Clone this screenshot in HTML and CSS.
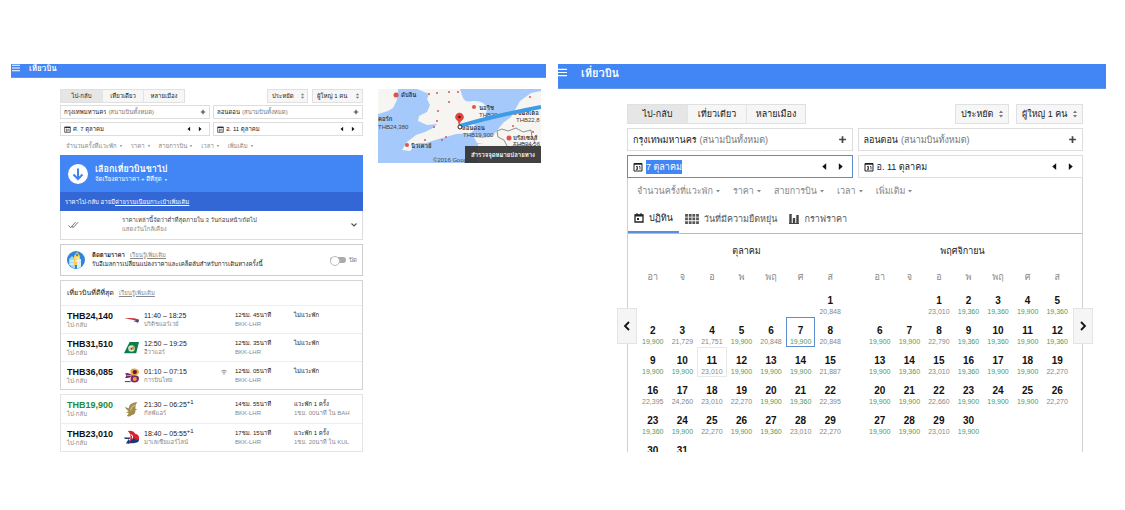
FILE: index.html
```html
<!DOCTYPE html>
<html lang="th">
<head>
<meta charset="utf-8">
<title>เที่ยวบิน</title>
<link rel="stylesheet" href="styles.css">
</head>
<body>
<svg class="defs" aria-hidden="true">
  <symbol id="menu" viewBox="0 0 10 10"><path d="M0 1.500h10M0 5h10M0 8.500h10" stroke="currentColor" stroke-width="1.300"/></symbol>
  <symbol id="cal" viewBox="0 0 10 10"><path d="M1 1.500h8v7.500H1z" fill="#fff" stroke="#222"/><path d="M1 2h8" stroke="#222" stroke-width="1.500"/><path d="M3 4.500h1.500v3H3M3 6h1.500M6 4.500h1v3" fill="none" stroke="#222" stroke-width=".8"/></symbol>
  <symbol id="plus" viewBox="0 0 8 8"><path d="M4 1v6M1 4h6" stroke="#444" stroke-width="1.500"/></symbol>
  <symbol id="prev" viewBox="0 0 8 8"><path d="M5.500 1v6L2 4z" fill="#111"/></symbol>
  <symbol id="next" viewBox="0 0 8 8"><path d="M2.500 1v6L6 4z" fill="#111"/></symbol>
  <symbol id="drop" viewBox="0 0 6 6"><path d="M1 2h4L3 4.500z" fill="currentColor"/></symbol>
  <symbol id="updown" viewBox="0 0 6 10"><path d="M1 4l2-2.500L5 4zM1 6l2 2.500L5 6z" fill="#777"/></symbol>
</svg>
<main class="screens">
  <section class="screen small">
    <header class="bar"><button class="icon-btn" aria-label="เมนู"><svg class="menu"><use href="#menu"/></svg></button><h1>เที่ยวบิน</h1></header>
    <div class="content">
      <div class="results">
        <form class="search">
          <div class="top-row">
            <div class="tabs"><button type="button" class="on">ไป-กลับ</button><button type="button">เที่ยวเดียว</button><button type="button">หลายเมือง</button></div>
            <span class="pick"><select aria-label="ชั้นโดยสาร"><option>ประหยัด</option></select><svg><use href="#updown"/></svg></span>
            <span class="pick"><select aria-label="ผู้โดยสาร"><option>ผู้ใหญ่ 1 คน</option></select><svg><use href="#updown"/></svg></span>
          </div>
          <div class="fields">
            <label class="field"><input type="text" aria-label="ต้นทาง" value="กรุงเทพมหานคร"><span class="hint">(สนามบินทั้งหมด)</span><svg class="end"><use href="#plus"/></svg></label>
            <label class="field"><input type="text" aria-label="ปลายทาง" value="ลอนดอน"><span class="hint">(สนามบินทั้งหมด)</span><svg class="end"><use href="#plus"/></svg></label>
            <div class="field"><svg class="cal"><use href="#cal"/></svg><input type="text" aria-label="วันไป" value="ศ. 7 ตุลาคม"><button type="button" class="icon-btn end" aria-label="ก่อนหน้า"><svg><use href="#prev"/></svg></button><button type="button" class="icon-btn" aria-label="ถัดไป"><svg><use href="#next"/></svg></button></div>
            <div class="field"><svg class="cal"><use href="#cal"/></svg><input type="text" aria-label="วันกลับ" value="อ. 11 ตุลาคม"><button type="button" class="icon-btn end" aria-label="ก่อนหน้า"><svg><use href="#prev"/></svg></button><button type="button" class="icon-btn" aria-label="ถัดไป"><svg><use href="#next"/></svg></button></div>
          </div>
        </form>
        <div class="filters"><button>จำนวนครั้งที่แวะพัก<svg><use href="#drop"/></svg></button><button>ราคา<svg><use href="#drop"/></svg></button><button>สายการบิน<svg><use href="#drop"/></svg></button><button>เวลา<svg><use href="#drop"/></svg></button><button>เพิ่มเติม<svg><use href="#drop"/></svg></button></div>

        <div class="banner">
          <svg class="arrow" viewBox="0 0 20 20"><circle cx="10" cy="10" r="10" fill="#fff"/><path d="M10 4.500v10M5.500 10.500L10 15l4.500-4.500" fill="none" stroke="#3f83f3" stroke-width="2"/></svg>
          <div><h2>เลือกเที่ยวบินขาไป</h2><p>จัดเรียงตามราคา + ดีที่สุด <svg class="tiny"><use href="#drop"/></svg></p></div>
        </div>
        <div class="fees"><p>ราคาไป-กลับ อาจมี<a href="#fees">ค่าธรรมเนียมกระเป๋าเพิ่มเติม</a></p></div>
        <div class="notice">
          <svg class="ticks" viewBox="0 0 12 8"><path d="M.5 4.500l2.500 2.500L8 1M4 5l1.500 2L11 1" fill="none" stroke="#666"/></svg>
          <div class="notice-text"><p>ราคาเหล่านี้จัดว่าต่ำที่สุดภายใน 3 วันก่อนหน้า/ถัดไป</p><p class="muted">แสดงวันใกล้เคียง</p></div>
          <button class="icon-btn" aria-label="ขยาย"><svg viewBox="0 0 8 8"><path d="M1.500 2.500L4 5l2.500-2.500" fill="none" stroke="#555" stroke-width="1.200"/></svg></button>
        </div>

        <div class="track">
          <svg class="tag" viewBox="0 0 18 18"><circle cx="9" cy="9" r="9" fill="#2f86d8"/><path d="M2 8l3-3 3 3v9H6l-4-3z" fill="#a6d4f5"/><path d="M7 5l3-4 3 4v9H7z" fill="#f7ce4b"/><path d="M10 8h4v8l-4 2z" fill="#dcecf8"/><path d="M8 7h4M8 10h4M3 10h4M3 13h4" stroke="#fff"/><circle cx="10" cy="4" r="1" fill="#2f6fb8"/></svg>
          <div><p><b>ติดตามราคา</b><a href="#track">เรียนรู้เพิ่มเติม</a></p><p>รับอีเมลการเปลี่ยนแปลงราคาและเคล็ดลับสำหรับการเดินทางครั้งนี้</p></div>
          <label class="switch"><input type="checkbox">ปิด</label>
        </div>

        <section class="flights">
          <h3>เที่ยวบินที่ดีที่สุด<a href="#best">เรียนรู้เพิ่มเติม</a></h3>
          <article class="flight">
            <div><strong>THB24,140</strong><small>ไป-กลับ</small></div>
            <svg viewBox="0 0 16 16"><path d="M0 7q8-1.500 16 1l-1 2q-5-2-15-3z" fill="#d62f3a"/><path d="M10 9.500l6-1-1 3z" fill="#2b4a8c"/></svg>
            <div><p class="time">11:40 – 18:25</p><small>บริติชแอร์เวย์</small></div><i></i>
            <div><p>12ชม. 45นาที</p><small>BKK-LHR</small></div><div><p>ไม่แวะพัก</p></div>
          </article>
          <article class="flight">
            <div><strong>THB31,510</strong><small>ไป-กลับ</small></div>
            <svg viewBox="0 0 16 16"><path d="M6 2h10l-3 12H0z" fill="#0c7c4c"/><circle cx="8" cy="9" r="3.500" fill="#d7e5d0"/><path d="M5 10l6-4v4z" fill="#e48b35"/><path d="M7 8l2 1-1 2z" fill="#0c7c4c"/></svg>
            <div><p class="time">12:50 – 19:25</p><small>อีวาแอร์</small></div><i></i>
            <div><p>12ชม. 35นาที</p><small>BKK-LHR</small></div><div><p>ไม่แวะพัก</p></div>
          </article>
          <article class="flight">
            <div><strong>THB36,085</strong><small>ไป-กลับ</small></div>
            <svg viewBox="0 0 16 16"><path d="M1 6q4-2 8 2-4 4-8 2 3-2 0-4z" fill="#792a68"/><path d="M8 8Q5 1 10 .5q6 0 6 4-1 4-8 3.500z" fill="#eea52c"/><path d="M8 8q8-1 8 3 0 4.500-5 4.500-6 0-3-7.500z" fill="#792a68"/><circle cx="11.500" cy="4.300" r="2.300" fill="#501d52"/><circle cx="11.500" cy="11.700" r="2.200" fill="#ef9e38"/><path d="M3 8h5" stroke="#e8a034"/><path d="M1 14.500h6" stroke="#333"/></svg>
            <div><p class="time">01:10 – 07:15</p><small>การบินไทย</small></div>
            <i><svg viewBox="0 0 8 8"><path d="M.5 3q3.500-3 7 0M2 4.800q2-1.800 4 0" fill="none" stroke="#666"/><circle cx="4" cy="6.500" r=".8" fill="#666"/></svg></i>
            <div><p>12ชม. 05นาที</p><small>BKK-LHR</small></div><div><p>ไม่แวะพัก</p></div>
          </article>
        </section>
        <section class="flights more">
          <article class="flight">
            <div><strong class="best">THB19,900</strong><small>ไป-กลับ</small></div>
            <svg viewBox="0 0 16 16"><path d="M14 0Q5 1 5 7L1 5q1 3 4 5l-3 1 3 1-2 3q3 1 5-1 5-1 4-5l2-1-2-1q0-4 2-7z" fill="#a28b4c"/><path d="M12 3Q7 5 7 9" fill="none" stroke="#ded2aa"/></svg>
            <div><p class="time">21:30 – 06:25<sup>+1</sup></p><small>กัลฟ์แอร์</small></div><i></i>
            <div><p>14ชม. 55นาที</p><small>BKK-LHR</small></div><div><p>แวะพัก 1 ครั้ง</p><small>1ชม. 00นาที ใน BAH</small></div>
          </article>
          <article class="flight">
            <div><strong>THB23,010</strong><small>ไป-กลับ</small></div>
            <svg viewBox="0 0 16 16"><path d="M4 1q6-1 8 3 4 1 4 4v3H9l-2 3-3 1 3-6q0-6-3-8z" fill="#d3242f"/><path d="M0 8h7l-1 1.500H1zM5 9.500l-3 5h3l3-4q3 0 2-3l2 3h4q0 3.500-6 3.500H7z" fill="#1c3776"/><path d="M7 5q3 0 2 4" fill="none" stroke="#fff"/></svg>
            <div><p class="time">18:40 – 05:55<sup>+1</sup></p><small>มาเลเซียแอร์ไลน์</small></div><i></i>
            <div><p>17ชม. 15นาที</p><small>BKK-LHR</small></div><div><p>แวะพัก 1 ครั้ง</p><small>1ชม. 20นาที ใน KUL</small></div>
          </article>
        </section>
      </div>

      <figure class="map">
        <svg viewBox="0 0 163 74" role="img" aria-label="แผนที่">
          <path d="M0 0h163v74H0z" fill="#a5c9fb"/>
          <path d="M0 0h20l-1 11-4 8-5 3-10 3zM39 0h43l3 9q3 5 9 3 13-1 15 8l-3 12-10 3 2 4-5 5-15 1-10 3-11 3-9 3-9 0-7 8-8-1 5-8 9-7 9-3 8-4 4-4-10 1-9-4 1-5 8-4 3-7-3-6 2-5zM153 4l10-2v72h-30l-4-4 0-5-8-8-22-3-3-6 7 1 10-1 5-5 7-9 8-6 9-16z" fill="#f7f5f2"/>
          <path d="M136 74l-4-9-15-10h-17v19z" fill="#f7f5f2"/>
          <path d="M119 42l5-2 6 2 8-3 7 4 8-2 1 7 3 5-4 4-8-3-5 3-4-2-2 5-5-3-3-6-6-3z" fill="none" stroke="#777" stroke-width=".8"/>
          <g fill="#ce5960"><circle cx="51" cy="5" r="1"/><circle cx="59" cy="4" r="1"/><circle cx="71" cy="3" r="1"/><circle cx="80" cy="3" r="1"/><circle cx="71" cy="13" r="1"/><circle cx="60" cy="22" r="1"/><circle cx="59" cy="32" r="1"/><circle cx="56" cy="38" r="1"/><circle cx="68" cy="48" r="1"/><circle cx="64" cy="51" r="1"/><circle cx="47" cy="51" r="1"/><circle cx="152" cy="8" r="1"/><circle cx="155" cy="43" r="1"/><circle cx="135" cy="37" r="1"/></g>
          <g fill="#df524e"><circle cx="18" cy="6" r="2.500"/><circle cx="96" cy="18" r="2"/><circle cx="29" cy="56" r="2"/><circle cx="131" cy="49" r="2.500"/><circle cx="137" cy="24" r="2"/></g>
          <g class="map-text"><text x="23" y="8">ดับลิน</text><text x="0" y="32">คอร์ก</text><text class="fare" x="0" y="40">THB24,380</text><text x="101" y="21">นอริช</text><text class="fare" x="101" y="28">THB20,</text><text x="140" y="26">อัมสเตอ</text><text class="fare" x="138" y="33">THB22,8</text><text x="84" y="41">ลอนดอน</text><text class="fare" x="85" y="48">THB19,900</text><text x="135" y="51">บรัสเซลส์</text><text class="fare" x="135" y="57">THB24,56</text><text x="33" y="59">นิวเควย์</text><text class="fare" x="55" y="73">©2016 Goog</text></g>
          <path d="M82 37Q115 27 163 18" fill="none" stroke="#3b9de8" stroke-width="4"/>
          <circle cx="82" cy="38" r="2" fill="#fff" stroke="#222"/>
          <path d="M81 36q0-4-3-6a4 4 0 1 1 7 0q-3 2-4 6z" fill="#e8453c" stroke="#b7312b" stroke-width=".5"/><circle cx="81.500" cy="28" r="1.300" fill="#5d1512"/>
        </svg>
        <button>สำรวจจุดหมายปลายทาง</button>
      </figure>
    </div>
  </section>

  <section class="screen large">
    <header class="bar"><button class="icon-btn" aria-label="เมนู"><svg class="menu"><use href="#menu"/></svg></button><h1>เที่ยวบิน</h1></header>
    <div class="content">
      <div class="results">
        <form class="search">
          <div class="top-row">
            <div class="tabs"><button type="button" class="on">ไป-กลับ</button><button type="button">เที่ยวเดียว</button><button type="button">หลายเมือง</button></div>
            <span class="pick"><select aria-label="ชั้นโดยสาร"><option>ประหยัด</option></select><svg><use href="#updown"/></svg></span>
            <span class="pick"><select aria-label="ผู้โดยสาร"><option>ผู้ใหญ่ 1 คน</option></select><svg><use href="#updown"/></svg></span>
          </div>
          <div class="fields">
            <label class="field"><input type="text" aria-label="ต้นทาง" value="กรุงเทพมหานคร"><span class="hint">(สนามบินทั้งหมด)</span><svg class="end"><use href="#plus"/></svg></label>
            <label class="field"><input type="text" aria-label="ปลายทาง" value="ลอนดอน"><span class="hint">(สนามบินทั้งหมด)</span><svg class="end"><use href="#plus"/></svg></label>
            <div class="field active"><svg class="cal"><use href="#cal"/></svg><input type="text" aria-label="วันไป" value="7 ตุลาคม"><button type="button" class="icon-btn end" aria-label="ก่อนหน้า"><svg><use href="#prev"/></svg></button><button type="button" class="icon-btn" aria-label="ถัดไป"><svg><use href="#next"/></svg></button></div>
            <div class="field"><svg class="cal"><use href="#cal"/></svg><input type="text" aria-label="วันกลับ" value="อ. 11 ตุลาคม"><button type="button" class="icon-btn end" aria-label="ก่อนหน้า"><svg><use href="#prev"/></svg></button><button type="button" class="icon-btn" aria-label="ถัดไป"><svg><use href="#next"/></svg></button></div>
          </div>
        </form>
        <div class="picker">
          <div class="filters"><button>จำนวนครั้งที่แวะพัก<svg><use href="#drop"/></svg></button><button>ราคา<svg><use href="#drop"/></svg></button><button>สายการบิน<svg><use href="#drop"/></svg></button><button>เวลา<svg><use href="#drop"/></svg></button><button>เพิ่มเติม<svg><use href="#drop"/></svg></button></div>
          <nav class="views">
            <button class="on"><svg class="v-cal" viewBox="0 0 10 10"><path d="M1 2h8v7H1z" fill="none" stroke="#222" stroke-width="1.300"/><path d="M1 2.500h8" stroke="#222" stroke-width="2"/><path d="M3 0v2M7 0v2" stroke="#222"/><path d="M3 5h2v2H3z" fill="#222"/></svg>ปฏิทิน</button>
            <button><svg class="v-grid" viewBox="0 0 14 10"><path d="M1.500 0v10M5.200 0v10M8.800 0v10M12.500 0v10" stroke="#555" stroke-width="2.800" stroke-dasharray="2.700 .9"/></svg>วันที่มีความยืดหยุ่น</button>
            <button><svg class="v-bars" viewBox="0 0 10 10"><path d="M1.500 0v10M5 4v6M8.500 1v9" stroke="#444" stroke-width="2.400"/><path d="M0 9.500h10" stroke="#444"/></svg>กราฟราคา</button>
          </nav>
          <div class="months">
            <table>
              <caption>ตุลาคม</caption>
              <thead><tr><th>อา</th><th>จ</th><th>อ</th><th>พ</th><th>พฤ</th><th>ศ</th><th>ส</th></tr></thead>
              <tbody>
              <tr><td></td><td></td><td></td><td></td><td></td><td></td><td><b>1</b>20,848</td></tr>
              <tr><td class="low"><b>2</b>19,900</td><td><b>3</b>21,729</td><td><b>4</b>21,751</td><td class="low"><b>5</b>19,900</td><td><b>6</b>20,848</td><td class="low chosen"><b>7</b>19,900</td><td><b>8</b>20,848</td></tr>
              <tr><td class="low"><b>9</b>19,900</td><td class="low"><b>10</b>19,900</td><td class="return"><b>11</b>23,010</td><td class="low"><b>12</b>19,900</td><td class="low"><b>13</b>19,900</td><td class="low"><b>14</b>19,900</td><td><b>15</b>21,887</td></tr>
              <tr><td><b>16</b>22,395</td><td><b>17</b>24,260</td><td><b>18</b>23,010</td><td><b>19</b>22,270</td><td class="low"><b>20</b>19,900</td><td class="low"><b>21</b>19,360</td><td><b>22</b>22,395</td></tr>
              <tr><td class="low"><b>23</b>19,360</td><td class="low"><b>24</b>19,900</td><td><b>25</b>22,270</td><td class="low"><b>26</b>19,900</td><td class="low"><b>27</b>19,360</td><td><b>28</b>23,010</td><td><b>29</b>22,270</td></tr>
              <tr><td><b>30</b></td><td><b>31</b></td><td></td><td></td><td></td><td></td><td></td></tr>
              </tbody>
            </table>
            <table>
              <caption>พฤศจิกายน</caption>
              <thead><tr><th>อา</th><th>จ</th><th>อ</th><th>พ</th><th>พฤ</th><th>ศ</th><th>ส</th></tr></thead>
              <tbody>
              <tr><td></td><td></td><td><b>1</b>23,010</td><td class="low"><b>2</b>19,360</td><td class="low"><b>3</b>19,360</td><td class="low"><b>4</b>19,900</td><td class="low"><b>5</b>19,360</td></tr>
              <tr><td class="low"><b>6</b>19,900</td><td class="low"><b>7</b>19,900</td><td><b>8</b>22,790</td><td class="low"><b>9</b>19,360</td><td class="low"><b>10</b>19,360</td><td class="low"><b>11</b>19,900</td><td class="low"><b>12</b>19,360</td></tr>
              <tr><td class="low"><b>13</b>19,900</td><td class="low"><b>14</b>19,360</td><td><b>15</b>23,010</td><td class="low"><b>16</b>19,360</td><td class="low"><b>17</b>19,900</td><td class="low"><b>18</b>19,900</td><td><b>19</b>22,270</td></tr>
              <tr><td class="low"><b>20</b>19,900</td><td class="low"><b>21</b>19,900</td><td><b>22</b>22,660</td><td class="low"><b>23</b>19,900</td><td class="low"><b>24</b>19,900</td><td class="low"><b>25</b>19,900</td><td><b>26</b>22,270</td></tr>
              <tr><td class="low"><b>27</b>19,900</td><td class="low"><b>28</b>19,900</td><td><b>29</b>23,010</td><td class="low"><b>30</b>19,900</td><td></td><td></td><td></td></tr>
              </tbody>
            </table>
          </div>
          <button class="page back" aria-label="เดือนก่อนหน้า"><svg viewBox="0 0 8 10"><path d="M6 1L2 5l4 4" fill="none" stroke="#111" stroke-width="1.800"/></svg></button>
          <button class="page forward" aria-label="เดือนถัดไป"><svg viewBox="0 0 8 10"><path d="M2 1l4 4-4 4" fill="none" stroke="#111" stroke-width="1.800"/></svg></button>
        </div>
      </div>
    </div>
  </section>
</main>
</body>
</html>
```
FILE: styles.css
```css
* { box-sizing: border-box; }
body { margin: 0; background: #fff; color: #222; font-family: "Liberation Sans", Loma, "Noto Looped Thai", "Noto Sans Thai", sans-serif; }
h1, h2, h3, p, figure { margin: 0; font-weight: normal; }
button, input, select { font: inherit; color: inherit; margin: 0; padding: 0; border: 0; background: none; }
svg { display: block; flex: none; }
a { color: inherit; }
.defs { position: absolute; width: 0; height: 0; }

.screens { display: flex; gap: 12px; padding: 64px 19px 58px 11px; }
.screen { min-width: 0; max-height: 388px; overflow: hidden; }
.small { flex: 535; font-size: 6px; line-height: 10px; }
.large { flex: 548; font-size: 9px; line-height: 14px; }

.bar { display: flex; align-items: flex-start; background: #4285f4; color: #fff; }
.small .bar { height: 14px; gap: 9px; padding-left: 1px; border-bottom: 1px solid #6b97dc; }
.large .bar { height: 25px; gap: 14px; border-bottom: 1px solid #6b97dc; }
.small .menu { width: 8px; height: 8px; }
.large .menu { width: 9px; height: 17px; }
.bar h1 { font-weight: bold; }
.small h1 { font-size: 8px; line-height: 10px; }
.large h1 { font-size: 11px; line-height: 18px; }
.icon-btn { display: flex; }

.small .content { display: flex; align-items: flex-start; gap: 15px; padding: 11px 5px 0 49px; }
.large .content { padding: 15px 23px 0 69px; }
.results { flex: 1; min-width: 0; }

.top-row { display: flex; align-items: center; }
.tabs { display: flex; margin-right: auto; border: 1px solid #e0e0e0; background: #f6f6f6; }
.tabs button { color: #222; }
.tabs button + button { border-left: 1px solid #e4e4e4; }
.tabs .on { background: #e6e6e6; }
.small .tabs button { width: 41px; height: 12px; }
.large .tabs button { width: 59px; height: 18px; }
.pick { display: flex; align-items: center; justify-content: space-between; background: #f6f6f6; border: 1px solid #e0e0e0; }
.pick select { appearance: none; flex: 1; min-width: 0; color: #222; }
.small .pick { height: 14px; margin-left: 4px; padding: 0 2px 0 4px; width: 41px; }
.small .pick + .pick { width: 51px; }
.large .pick { height: 20px; margin-left: 7px; padding: 0 4px 0 5px; width: 54px; }
.large .pick + .pick { width: 67px; }
.small .pick svg { width: 5px; height: 8px; }
.large .pick svg { width: 6px; height: 10px; }

.fields { display: grid; grid-template-columns: 1fr 1fr; }
.small .fields { gap: 3px; margin-top: 2px; }
.large .fields { gap: 4px 5px; margin-top: 4px; }
.field { display: flex; align-items: center; border: 1px solid #ddd; }
.small .field { height: 14px; padding: 0 3px; gap: 2px; }
.large .field { height: 23px; padding: 0 5px; gap: 3px; }
.field input { field-sizing: content; color: #222; }
.hint { color: #777; }
.field .end { margin-left: auto; }
.small .field svg { width: 6px; height: 6px; }
.small .field .icon-btn { width: 9px; }
.large .field svg { width: 9px; height: 9px; }
.large .field .icon-btn { width: 13px; justify-content: center; }
.small .field svg.cal { width: 7px; height: 7px; }
.large .field svg.cal { width: 10px; height: 10px; }
.active { border: 1px solid #5b8bd0; }
.field.active input { background: #4285f4; color: #fff; }

.filters { display: flex; color: #888; }
.filters button { display: flex; align-items: center; }
.small .filters { gap: 8px; padding: 4px 6px; height: 19px; }
.large .filters { gap: 12px; padding: 6px 9px; height: 26px; }
.small .filters svg, .tiny { width: 4px; height: 4px; margin-left: 2px; }
.large .filters svg { width: 6px; height: 6px; margin-left: 2px; }

.banner { display: flex; align-items: center; gap: 7px; height: 37px; padding: 0 8px; background: #4285f4; color: #fff; }
.arrow { width: 20px; height: 20px; }
.banner h2 { font-size: 9px; line-height: 12px; font-weight: bold; }
.banner p { display: flex; align-items: center; line-height: 9px; }
.fees { display: flex; align-items: center; height: 19px; padding: 0 5px; background: #3367d6; color: #fff; }
.notice { display: flex; align-items: center; height: 29px; padding: 0 4px 0 7px; border: 1px solid #ddd; border-top: 0; color: #444; }
.ticks { width: 11px; height: 8px; }
.notice-text { flex: 1; margin-left: 43px; line-height: 9px; }
.notice .icon-btn svg { width: 8px; height: 8px; }
.muted { color: #888; }
.track { display: flex; align-items: center; gap: 7px; height: 32px; margin-top: 4px; padding: 0 5px 0 6px; border: 1px solid #ccc; }
.track p { line-height: 9px; }
.tag { width: 18px; height: 18px; }
.small .results a { color: #888; margin-left: 5px; }
.small .results .fees a { color: #fff; margin-left: 0; }
.switch { display: flex; align-items: center; gap: 3px; margin-left: auto; color: #777; }
.switch input { appearance: none; display: flex; width: 16px; height: 6px; border-radius: 3px; background: #aaa; }
.switch input::before { content: ""; width: 8px; height: 8px; margin-top: -1px; border-radius: 50%; background: #fff; border: 1px solid #bbb; }

.flights { margin-top: 4px; border: 1px solid #d4d4d4; }
.more { border-color: #e4e4e4; }
.flights h3 { height: 24px; padding: 0 6px; font-size: 7px; line-height: 24px; }
.flights h3 a { font-size: 6px; }
.flight { display: grid; grid-template-columns: 53px 16px 73px 10px 55px 1fr; column-gap: 4px; align-items: center; height: 28px; padding: 0 0 0 6px; border-top: 1px solid #eee; }
.more .flight:first-child { border-top: 0; }
.flight > svg { width: 15px; height: 15px; }
.flight > div { align-self: start; padding-top: 5px; white-space: nowrap; }
.flight p { line-height: 9px; }
.flight .time { font-size: 7px; }
.flight strong { display: block; font-size: 9px; line-height: 10px; color: #111; }
.flight .best { color: #1f8b3b; }
.flight small { display: block; font-size: 6px; line-height: 8px; color: #888; }
.flight sup { font-size: 6px; line-height: 0; }
.flight i { align-self: start; padding-top: 7px; }
.flight i svg { width: 6px; height: 6px; }

.map { position: relative; width: 163px; overflow: hidden; }
.map svg { width: 100%; height: auto; }
.map-text { font-size: 6px; font-weight: bold; fill: #333; }
.map-text .fare { font-weight: normal; fill: #444; }
.map button { position: absolute; right: 0; bottom: 0; width: 76px; height: 17px; background: #333e; color: #fff; font-weight: bold; white-space: nowrap; }

.picker { position: relative; border: 1px solid #d0d0d0; border-top: 0; border-bottom: 0; }
.views { display: flex; height: 30px; border-bottom: 1px solid #bbb; color: #555; }
.views button { display: flex; align-items: center; gap: 5px; padding: 0 6px; }
.views .on { color: #222; border-bottom: 2px solid #5b8fdc; }
.v-cal, .v-bars { width: 10px; height: 10px; }
.v-grid { width: 14px; height: 10px; }
.months { display: grid; grid-template-columns: 1fr 1fr; gap: 20px; align-items: start; padding: 9px 10px 0; }
.months table { width: 100%; table-layout: fixed; border-collapse: collapse; }
.months caption { height: 24px; padding: 0 0 0 10px; line-height: 16px; }
.months table + table caption { padding: 0 12px 0 0; }
.months th { height: 20px; padding: 0; font-weight: normal; color: #888; line-height: 16px; vertical-align: middle; }
.months td { height: 30px; padding: 8px 0 0; text-align: center; vertical-align: top; font-size: 7px; line-height: 9px; color: #888; }
.months b { display: block; font-size: 10px; line-height: 12px; color: #111; }
.months .low { color: #4a9d5d; }
.months .chosen { outline: 1px solid #5b8bd0; outline-offset: -1px; }
.months .return { outline: 1px solid #e8e8e8; outline-offset: -1px; }
.page { position: absolute; top: 130px; display: flex; align-items: center; justify-content: center; width: 20px; height: 36px; background: #f5f5f5; border: 1px solid #e4e4e4; }
.page svg { width: 8px; height: 10px; }
.back { left: -11px; }
.forward { right: -11px; }
```
